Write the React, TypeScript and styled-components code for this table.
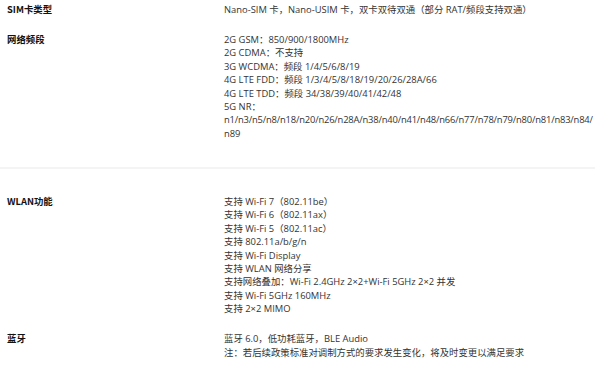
import React, { FC } from 'react';
import styled, { createGlobalStyle } from 'styled-components';

const GlobalStyle = createGlobalStyle`
  html, body {
    margin: 0;
    padding: 0;
    background: #ffffff;
  }
  body {
    font-family: 'Open Sans', 'Noto Sans CJK SC', sans-serif;
  }
`;

const SpecPage = styled.div`
  width: 600px;
  padding-top: 3px;
  box-sizing: border-box;
`;

const Section = styled.div`
  display: flex;
  flex-direction: column;
  gap: 16.5px;
  padding-left: 7px;
`;

const SpecRow = styled.div`
  display: grid;
  grid-template-columns: 217px 372px;
`;

const Label = styled.div`
  font-family: 'Noto Sans CJK SC', sans-serif;
  font-size: 9.4px;
  line-height: 13.4px;
  font-weight: 700;
  color: #111;
`;

const Value = styled.div`
  font-size: 9.4px;
  line-height: 13.4px;
  color: #333;
  white-space: nowrap;
`;

const Line = styled.div<{ $dense?: boolean }>`
  letter-spacing: ${(p) => (p.$dense ? '-0.18px' : 'normal')};
`;

const Divider = styled.hr`
  border: none;
  height: 2px;
  width: 595px;
  background: #f4f4f4;
  margin: 26.6px 0 26.3px;
`;

type Spec = { label: string; lines: string[] };

const network: Spec[] = [
  {
    label: 'SIM卡类型',
    lines: ['Nano-SIM 卡，Nano-USIM 卡，双卡双待双通（部分 RAT/频段支持双通）'],
  },
  {
    label: '网络频段',
    lines: [
      '2G GSM：850/900/1800MHz',
      '2G CDMA：不支持',
      '3G WCDMA：频段 1/4/5/6/8/19',
      '4G LTE FDD：频段 1/3/4/5/8/18/19/20/26/28A/66',
      '4G LTE TDD：频段 34/38/39/40/41/42/48',
      '5G NR：',
      'n1/n3/n5/n8/n18/n20/n26/n28A/n38/n40/n41/n48/n66/n77/n78/n79/n80/n81/n83/n84/',
      'n89',
    ],
  },
];

const wireless: Spec[] = [
  {
    label: 'WLAN功能',
    lines: [
      '支持 Wi-Fi 7（802.11be）',
      '支持 Wi-Fi 6（802.11ax）',
      '支持 Wi-Fi 5（802.11ac）',
      '支持 802.11a/b/g/n',
      '支持 Wi-Fi Display',
      '支持 WLAN 网络分享',
      '支持网络叠加：Wi-Fi 2.4GHz 2×2+Wi-Fi 5GHz 2×2 并发',
      '支持 Wi-Fi 5GHz 160MHz',
      '支持 2×2 MIMO',
    ],
  },
  {
    label: '蓝牙',
    lines: ['蓝牙 6.0，低功耗蓝牙，BLE Audio', '注：若后续政策标准对调制方式的要求发生变化，将及时变更以满足要求'],
  },
];

const SpecList: FC<{ specs: Spec[] }> = ({ specs }) => (
  <Section>
    {specs.map((spec) => (
      <SpecRow key={spec.label}>
        <Label>{spec.label}</Label>
        <Value>
          {spec.lines.map((line, i) => (
            // long band lists are packed a little tighter so they fit the column
            <Line key={i} $dense={line.length > 60 && !/[\u4e00-\u9fff]/.test(line)}>
              {line}
            </Line>
          ))}
        </Value>
      </SpecRow>
    ))}
  </Section>
);

const App: FC = () => (
  <>
    <GlobalStyle />
    <SpecPage>
      <SpecList specs={network} />
      <Divider />
      <SpecList specs={wireless} />
    </SpecPage>
  </>
);

export default App;
